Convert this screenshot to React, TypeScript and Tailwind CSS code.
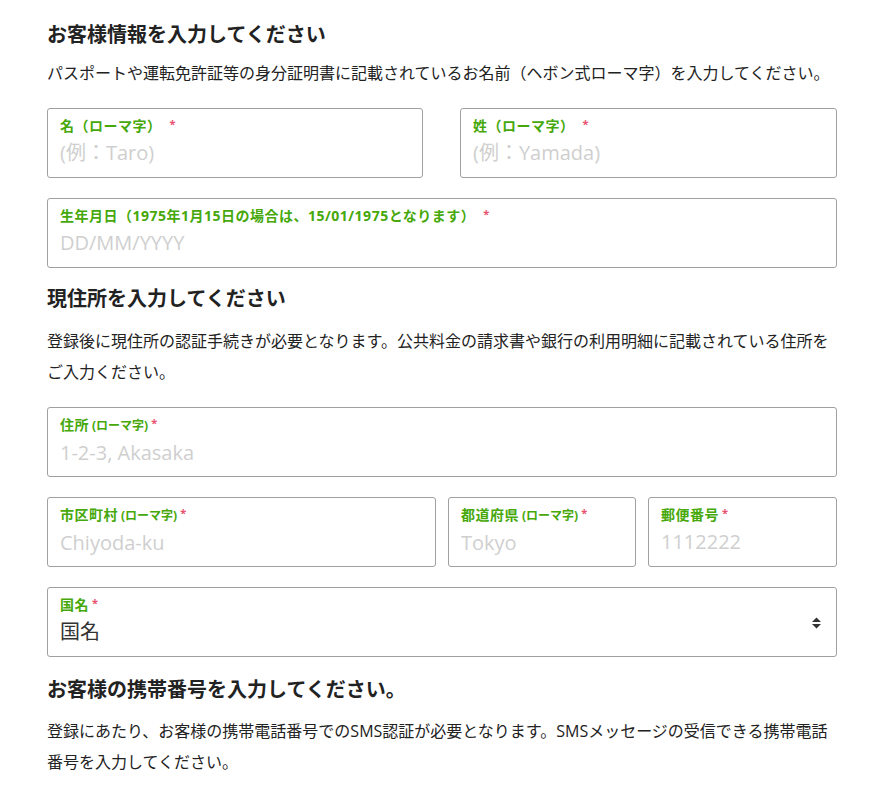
import React from "react";

const FONT = { fontFamily: '"Open Sans", "Noto Sans CJK JP", sans-serif' };

function Label({ main, sub, small }: { main: string; sub?: string; small?: boolean }) {
  return (
    <div className="flex items-start text-[14px] font-bold leading-[20px] tracking-[0.5px] text-[#46a80a] whitespace-nowrap">
      <span>{main}</span>
      {sub && <span className="ml-[3px] text-[12px] leading-[21px] tracking-[0px]">{sub}</span>}
      <span
        className={
          small
            ? "ml-[3px] text-[11px] leading-[15px] text-[#e8506e]"
            : "ml-[8px] text-[11px] leading-[15px] text-[#e8506e]"
        }
      >
        *
      </span>
    </div>
  );
}

function Field({
  main,
  sub,
  small,
  placeholder,
  className,
}: {
  main: string;
  sub?: string;
  small?: boolean;
  placeholder: string;
  className?: string;
}) {
  return (
    <div
      className={
        "h-[70px] rounded-[3px] border border-[#a0a0a0] bg-white px-[12px] pt-[7px] flex flex-col " +
        (className ?? "")
      }
    >
      <Label main={main} sub={sub} small={small} />
      <input
        placeholder={placeholder}
        className="mt-[2px] h-[30px] w-full bg-transparent text-[20px] leading-[30px] text-[#333] outline-none placeholder:text-[#cfcfcf]"
        style={FONT}
      />
    </div>
  );
}

export default function App() {
  return (
    <div className="min-h-[785px] w-[890px] bg-white text-[#222]" style={FONT}>
      <div className="ml-[47px] w-[790px] pt-[20px]">
        <h2 className="text-[20px] font-bold leading-[30px] text-[#222]">お客様情報を入力してください</h2>
        <p className="mt-[8px] text-[16px] leading-[31px] text-[#222] whitespace-nowrap">
          パスポートや運転免許証等の身分証明書に記載されているお名前（ヘボン式ローマ字）を入力してください。
        </p>

        <div className="mt-[19px] flex gap-[37px]">
          <Field className="w-[376px]" main="名（ローマ字）" placeholder="(例：Taro)" />
          <Field className="w-[377px]" main="姓（ローマ字）" placeholder="(例：Yamada)" />
        </div>

        <Field
          className="mt-[20px]"
          main="生年月日（1975年1月15日の場合は、15/01/1975となります）"
          placeholder="DD/MM/YYYY"
        />

        <h2 className="mt-[16px] text-[20px] font-bold leading-[30px] text-[#222]">現住所を入力してください</h2>
        <p className="mt-[12px] text-[16px] leading-[31px] text-[#222] whitespace-nowrap">
          登録後に現住所の認証手続きが必要となります。公共料金の請求書や銀行の利用明細に記載されている住所を
          <br />
          ご入力ください。
        </p>

        <Field className="mt-[19px]" main="住所" sub="(ローマ字)" small placeholder="1-2-3, Akasaka" />

        <div className="mt-[20px] flex gap-[12px]">
          <Field className="w-[389px]" main="市区町村" sub="(ローマ字)" small placeholder="Chiyoda-ku" />
          <Field className="w-[188px]" main="都道府県" sub="(ローマ字)" small placeholder="Tokyo" />
          <Field className="w-[189px]" main="郵便番号" small placeholder="1112222" />
        </div>

        <div className="mt-[20px] relative h-[70px] rounded-[3px] border border-[#a0a0a0] bg-white px-[12px] pt-[7px] flex flex-col">
          <Label main="国名" small />
          <div className="mt-[2px] h-[30px] text-[20px] leading-[30px] text-[#333]">国名</div>
          <svg className="absolute right-[14px] top-[28px]" width="11" height="14" viewBox="0 0 11 14">
            <path d="M1 6 L5.5 1.5 L10 6 Z" fill="#333" />
            <path d="M1 8 L5.5 12.5 L10 8 Z" fill="#333" />
          </svg>
        </div>

        <h2 className="mt-[18px] text-[20px] font-bold leading-[30px] text-[#222]">お客様の携帯番号を入力してください。</h2>
        <p className="mt-[11px] text-[16px] leading-[31px] text-[#222] whitespace-nowrap">
          登録にあたり、お客様の携帯電話番号でのSMS認証が必要となります。SMSメッセージの受信できる携帯電話
          <br />
          番号を入力してください。
        </p>
      </div>
    </div>
  );
}
